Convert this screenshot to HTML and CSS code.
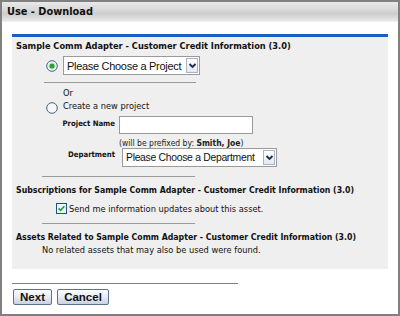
FILE: index.html
```html
<!DOCTYPE html>
<html lang="en">
<head>
<meta charset="utf-8">
<title>Use - Download</title>
<link rel="stylesheet" href="styles.css">
</head>
<body>
<div class="window">
  <div class="titlebar">Use - Download</div>
  <div class="content">
    <div class="panel">
      <h2 class="heading">Sample Comm Adapter - Customer Credit Information (3.0)</h2>

      <div class="option-row">
        <span class="radio checked"><svg width="12" height="12" viewBox="0 0 12 12"><circle cx="6" cy="6" r="5.3" fill="#f7f7f7" stroke="#3d6588" stroke-width="1"/><circle cx="6" cy="6" r="2.6" fill="#2c9f32"/><circle cx="6" cy="6" r="3.2" fill="none" stroke="#9fd59f" stroke-width="0.6"/></svg></span>
        <div class="select select-project">
          <span class="select-text">Please Choose a Project</span>
          <span class="select-btn"><svg width="9" height="9" viewBox="0 0 9 9"><path d="M1.5 3 L4.5 6 L7.5 3" fill="none" stroke="#1d2a4a" stroke-width="1.8"/></svg></span>
        </div>
      </div>

      <div class="rule rule-short first"></div>
      <div class="or">Or</div>

      <div class="option-row create-row">
        <span class="radio"><svg width="12" height="12" viewBox="0 0 12 12"><circle cx="6" cy="6" r="5.3" fill="#f7f7f7" stroke="#3d6588" stroke-width="1"/></svg></span>
        <span class="small-text">Create a new project</span>
      </div>

      <div class="form-grid">
        <span class="label label-name">Project Name</span>
        <span class="input"></span>
        <span></span>
        <span class="hint">(will be prefixed by: <b>Smith, Joe</b>)</span>
        <span class="label label-dept">Department</span>
        <div class="select select-dept">
          <span class="select-text">Please Choose a Department</span>
          <span class="select-btn"><svg width="9" height="9" viewBox="0 0 9 9"><path d="M1.5 3 L4.5 6 L7.5 3" fill="none" stroke="#1d2a4a" stroke-width="1.8"/></svg></span>
        </div>
      </div>

      <div class="rule rule-short second"></div>
      <h3 class="subheading">Subscriptions for Sample Comm Adapter - Customer Credit Information (3.0)</h3>
      <div class="check-row">
        <span class="checkbox"><svg width="11" height="11" viewBox="0 0 11 11"><rect x="0.5" y="0.5" width="10" height="10" fill="#eef4ee" stroke="#1c5180"/><path d="M2.6 5.4 L4.5 7.4 L8.4 3.2" fill="none" stroke="#21a121" stroke-width="1.6"/></svg></span>
        <span class="small-text">Send me information updates about this asset.</span>
      </div>
      <div class="rule rule-short third"></div>
      <h3 class="subheading">Assets Related to Sample Comm Adapter - Customer Credit Information (3.0)</h3>
      <p class="small-text none-found">No related assets that may also be used were found.</p>
    </div>

    <div class="rule rule-bottom"></div>
    <div class="buttons">
      <button class="btn btn-next">Next</button>
      <button class="btn btn-cancel">Cancel</button>
    </div>
  </div>
</div>
</body>
</html>
```

FILE: styles.css
```css
html, body {
  margin: 0;
  padding: 0;
  background: #ffffff;
}

.window {
  box-sizing: border-box;
  width: 400px;
  height: 316px;
  border: 2px solid #808080;
  background: #ffffff;
  font-family: "DejaVu Sans", Verdana, sans-serif;
  color: #000;
}

.titlebar {
  height: 20px;
  line-height: 20px;
  padding-left: 5px;
  font-size: 9.8px;
  font-weight: bold;
  color: #111;
  background: linear-gradient(#e9e9e9 0%, #dadada 35%, #cdcdcd 60%, #e4e4e4 90%, #f2f2f2 100%);
}

.content {
  padding: 12px 10px 0 10px;
}

.panel {
  background: #efefef;
  border-top: 3px solid #1460c4;
  padding-bottom: 14px;
}

.heading {
  margin: 3px 0 0 4px;
  font-size: 9.2px;
  line-height: 12px;
  font-weight: bold;
  font-stretch: condensed;
  color: #111;
}

.option-row {
  display: flex;
  align-items: center;
  margin-top: 4px;
  height: 19px;
}

.radio {
  display: flex;
  width: 12px;
  height: 12px;
  margin-left: 34px;
}

.select {
  box-sizing: border-box;
  display: flex;
  align-items: center;
  justify-content: space-between;
  height: 19px;
  background: #fff;
  border: 1px solid #9a9a9a;
  padding: 0 1px 0 3px;
  font-family: "Liberation Sans", Arial, sans-serif;
  font-size: 11px;
  letter-spacing: -0.3px;
  color: #111;
  white-space: nowrap;
}

.select-project {
  margin-left: 5px;
  width: 137px;
}

.select-btn {
  box-sizing: border-box;
  display: flex;
  align-items: center;
  justify-content: center;
  flex: none;
  width: 12px;
  height: 15px;
  border: 1px solid #a9b4c4;
  background: linear-gradient(#ffffff, #e4e8ee);
}

.rule {
  height: 1px;
  background: #9a9a9a;
}

.rule-short {
  width: 152px;
}

.rule-short.first {
  margin: 7px 0 0 32px;
}

.rule-short.second,
.rule-short.third {
  margin: 9px 0 0 30px;
  width: 153px;
}

.small-text {
  font-size: 9.2px;
  line-height: 11px;
  font-stretch: condensed;
  color: #111;
}

.or {
  margin: 4px 0 0 51px;
  font-size: 9.2px;
  line-height: 11px;
  font-stretch: condensed;
  color: #111;
}

.create-row {
  align-items: flex-start;
  margin-top: 2px;
  height: 11px;
}

.create-row .radio {
  margin-top: 2px;
}

.create-row .small-text {
  margin-left: 5px;
}

.form-grid {
  display: grid;
  grid-template-columns: 103px auto;
  column-gap: 4px;
  grid-template-rows: 18px 14px 19px;
  margin-top: 5px;
  justify-items: start;
}

.label {
  justify-self: end;
  font-size: 7.7px;
  line-height: 11px;
  font-weight: bold;
  font-stretch: condensed;
  color: #111;
}

.label-name {
  padding-top: 2px;
}

.label-dept {
  padding-top: 1px;
}

.input {
  box-sizing: border-box;
  width: 134px;
  height: 18px;
  background: #fff;
  border: 1px solid #9a9a9a;
}

.hint {
  align-self: end;
  font-size: 8.5px;
  line-height: 10px;
  font-stretch: condensed;
  color: #222;
}

.select-dept {
  margin-left: 3px;
  width: 155px;
  font-size: 10.4px;
}

.subheading {
  margin: 8px 0 0 4px;
  font-size: 8.7px;
  line-height: 11px;
  font-weight: bold;
  font-stretch: condensed;
  color: #111;
}

.check-row {
  display: flex;
  align-items: center;
  height: 12px;
  margin: 6px 0 0 44px;
}

.checkbox {
  display: flex;
  width: 11px;
  height: 11px;
}

.check-row .small-text {
  margin-left: 2px;
}

.none-found {
  margin: 1px 0 0 30px;
}

.rule-bottom {
  margin-top: 14px;
  width: 226px;
  background: #808080;
}

.buttons {
  display: flex;
  margin-top: 5px;
  padding-left: 1px;
  gap: 5px;
}

.btn {
  box-sizing: border-box;
  height: 16px;
  padding: 0;
  border: 1px solid #5f6f8f;
  border-radius: 2px;
  background: linear-gradient(#fbfcfe 0%, #e8ecf3 50%, #c9d1de 100%);
  font-family: "Liberation Sans", Arial, sans-serif;
  font-size: 11.5px;
  font-weight: bold;
  color: #111;
  line-height: 14px;
}

.btn-next {
  width: 39px;
}

.btn-cancel {
  width: 52px;
}
```
